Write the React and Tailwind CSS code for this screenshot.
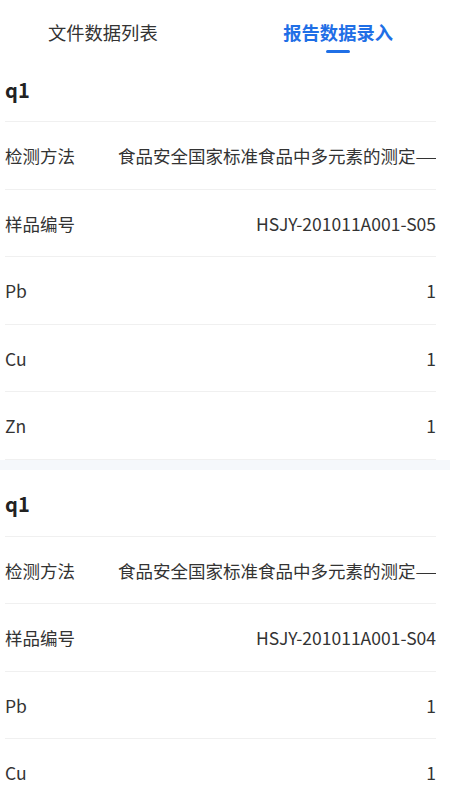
import React from "react";

const records = [
  {
    title: "q1",
    rows: [
      ["检测方法", "食品安全国家标准食品中多元素的测定——电感耦合等离子体质谱法"],
      ["样品编号", "HSJY-201011A001-S05"],
      ["Pb", "1"],
      ["Cu", "1"],
      ["Zn", "1"],
    ],
  },
  {
    title: "q1",
    rows: [
      ["检测方法", "食品安全国家标准食品中多元素的测定——电感耦合等离子体质谱法"],
      ["样品编号", "HSJY-201011A001-S04"],
      ["Pb", "1"],
      ["Cu", "1"],
      ["Zn", "1"],
    ],
  },
];

function Tabs() {
  return (
    <div className="flex h-[55px] items-start bg-white">
      <div className="ml-[48px] pt-[19px] text-[18.3px] leading-[26px] text-[#333333]">
        文件数据列表
      </div>
      <div className="ml-auto mr-[57px] flex flex-col items-center pt-[19px]">
        <span className="text-[18.3px] font-semibold leading-[26px] text-[#1f6fe6]">
          报告数据录入
        </span>
        <span className="mt-[5px] h-[3px] w-[24px] rounded-full bg-[#1f6fe6]" />
      </div>
    </div>
  );
}

function RecordCard({ record }) {
  return (
    <div className="bg-white pl-[5px] pr-[14px]">
      <div className="flex h-[67px] items-center border-b border-[#f0f0f0] pt-[3px] text-[20px] font-bold text-[#222222]">
        {record.title}
      </div>
      {record.rows.map(([label, value], i) => (
        <div
          key={i}
          className="flex h-[67.5px] items-center border-b border-[#f0f0f0] pt-[2px] text-[17.5px] text-[#333333]"
        >
          <div className="w-[113px] shrink-0">{label}</div>
          <div className="min-w-0 flex-1 overflow-hidden whitespace-nowrap text-right">
            {value}
          </div>
        </div>
      ))}
    </div>
  );
}

export default function App() {
  return (
    <div
      className="h-[800px] w-[450px] overflow-hidden bg-white"
      style={{ fontFamily: '"Noto Sans CJK SC", "Noto Sans", sans-serif' }}
    >
      <Tabs />
      <div className="flex flex-col gap-[10px] bg-[#f5f8fb]">
        {records.map((r, i) => (
          <RecordCard key={i} record={r} />
        ))}
      </div>
    </div>
  );
}
